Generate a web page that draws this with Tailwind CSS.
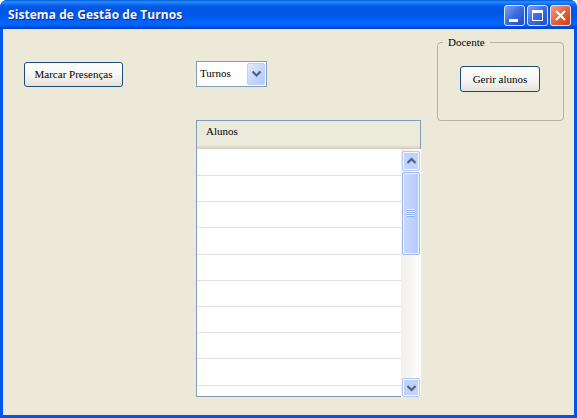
<!DOCTYPE html>
<html lang="pt">
<head>
<meta charset="utf-8">
<title>Sistema de Gestão de Turnos</title>
<script src="https://cdn.jsdelivr.net/npm/@tailwindcss/browser@4"></script>
</head>
<body class="w-[577px] h-[418px] overflow-hidden bg-white font-['Liberation_Serif',serif] text-[11px] leading-[13px] text-black">
<div class="w-[577px] h-[418px] flex flex-col rounded-t-[7px] overflow-hidden bg-[#0055ea]">
  <header class="h-[29px] shrink-0 flex items-center pl-[8px] pr-[6px] bg-[linear-gradient(to_bottom,#0058d8_0px,#2a8cff_2px,#1270f4_4px,#0058e6_7px,#0055e5_13px,#005cf5_18px,#0066ff_23px,#0062f8_25px,#004fd8_27px,#003fc0_29px)]">
    <h1 class="font-['Open_Sans',sans-serif] font-bold text-[12px] leading-4 tracking-[0.06px] text-[#f4f8ff] whitespace-nowrap [text-shadow:1px_1px_0_#0a2a8c]">Sistema de Gestão de Turnos</h1>
    <div class="ml-auto mt-[2px] flex gap-[2px]">
      <svg class="w-[21px] h-[21px]" viewBox="0 0 21 21"><defs><linearGradient id="b" x1="0" y1="0" x2="1" y2="1"><stop offset="0" stop-color="#7fa4f3"/><stop offset=".5" stop-color="#3c6be0"/><stop offset="1" stop-color="#1c48c8"/></linearGradient><linearGradient id="r" x1="0" y1="0" x2="1" y2="1"><stop offset="0" stop-color="#f0a088"/><stop offset=".5" stop-color="#e36340"/><stop offset="1" stop-color="#cf3c10"/></linearGradient></defs><rect x=".5" y=".5" width="20" height="20" rx="2.5" fill="url(#b)" stroke="#dce6fa"/><path d="M5 14h9v3H5z" fill="#fff"/></svg>
      <svg class="w-[21px] h-[21px]" viewBox="0 0 21 21"><rect x=".5" y=".5" width="20" height="20" rx="2.5" fill="url(#b)" stroke="#dce6fa"/><path d="M5 5h11v11H5zM6 8v7h9V8z" fill="#fff" fill-rule="evenodd"/></svg>
      <svg class="w-[21px] h-[21px]" viewBox="0 0 21 21"><rect x=".5" y=".5" width="20" height="20" rx="2.5" fill="url(#r)" stroke="#f4e4e0"/><path d="M6 6l9 9M15 6l-9 9" stroke="#fff" stroke-width="2.1"/></svg>
    </div>
  </header>
  <main class="mx-[3px] mb-[3px] flex-1 min-h-0 flex items-start bg-[#ece9d8]">
    <button class="ml-[21px] mt-[33px] w-[99px] h-[25px] shrink-0 rounded-[3px] border border-[#1c4c7c] bg-linear-to-b from-white via-[#f7f6f3] to-[#e6e3da]">Marcar Presenças</button>
    <section class="ml-[73px] mt-[32px] w-[225px] shrink-0">
      <div class="w-[71px] h-[26px] flex items-center border border-[#7f9db9] bg-white pl-[3px] pr-px">
        <span class="-mt-[2px]">Turnos</span>
        <span class="ml-auto w-[18px] h-[22px] rounded-[2px] border border-[#bccdf6] bg-linear-to-br from-[#e0e9fe] to-[#b0c8f8] flex items-center justify-center"><svg class="w-[11px] h-[8px]" viewBox="0 0 11 8"><path d="M1.5 1.5L5.5 5.5L9.5 1.5" fill="none" stroke="#4d6185" stroke-width="2.2"/></svg></span>
      </div>
      <div class="mt-[33px] w-[225px] h-[277px] flex flex-col">
        <div class="h-[29px] shrink-0 w-[225px] border border-b-0 border-[#7f9db9] bg-[linear-gradient(to_bottom,#ebeadb_0px,#ebeadb_24px,#e0dccb_26px,#cfcab8_28px)] pl-[9px] pt-[4px]">Alunos</div>
        <div class="flex-1 min-h-0 flex">
          <div class="w-[205px] h-full overflow-hidden border-l border-b border-[#7f9db9] bg-white">
            <div class="h-[27px] border-b border-[#e2e2e2]"></div>
            <div class="h-[26px] border-b border-[#e2e2e2]"></div>
            <div class="h-[26px] border-b border-[#e2e2e2]"></div>
            <div class="h-[27px] border-b border-[#e2e2e2]"></div>
            <div class="h-[26px] border-b border-[#e2e2e2]"></div>
            <div class="h-[26px] border-b border-[#e2e2e2]"></div>
            <div class="h-[26px] border-b border-[#e2e2e2]"></div>
            <div class="h-[26px] border-b border-[#e2e2e2]"></div>
            <div class="h-[27px] border-b border-[#e2e2e2]"></div>
          </div>
          <div class="w-[20px] h-full flex flex-col items-center bg-linear-to-r from-[#f0efea] to-[#fefefd] pt-[2px]">
            <span class="w-[18px] h-[20px] rounded-[2px] border border-[#b4c8f2] bg-[#c1d3fb] shadow-[inset_0_0_0_1px_#f4f7ff] flex items-center justify-center"><svg class="w-[11px] h-[8px]" viewBox="0 0 11 8"><path d="M1.5 6L5.5 2L9.5 6" fill="none" stroke="#4d6185" stroke-width="2.2"/></svg></span>
            <span class="mt-[1px] w-[18px] h-[83px] shrink-0 rounded-[2px] border border-[#a3baea] bg-linear-to-r from-[#c9d7fc] to-[#b3cbfe] shadow-[inset_0_0_0_1px_#e8effe] flex flex-col items-center justify-center pr-[1px] pb-[2px]">
              <i class="w-[8px] h-px bg-[#eef4fe]"></i><i class="w-[8px] h-px bg-[#8cb0f8]"></i><i class="w-[8px] h-px bg-[#eef4fe]"></i><i class="w-[8px] h-px bg-[#8cb0f8]"></i><i class="w-[8px] h-px bg-[#eef4fe]"></i><i class="w-[8px] h-px bg-[#8cb0f8]"></i><i class="w-[8px] h-px bg-[#eef4fe]"></i><i class="w-[8px] h-px bg-[#8cb0f8]"></i>
            </span>
            <span class="mt-auto w-[18px] h-[19px] rounded-[2px] border border-[#b4c8f2] bg-[#c1d3fb] shadow-[inset_0_0_0_1px_#f4f7ff] flex items-center justify-center"><svg class="w-[11px] h-[8px]" viewBox="0 0 11 8"><path d="M1.5 2L5.5 6L9.5 2" fill="none" stroke="#4d6185" stroke-width="2.2"/></svg></span>
          </div>
        </div>
      </div>
    </section>
    <fieldset class="ml-[16px] mt-[7px] w-[127px] h-[85px] shrink-0 rounded-[4px] border border-[#b5b29f] pl-[22px]">
      <legend class="-ml-[17px] pl-[5px] pr-[5px]">Docente</legend>
      <button class="mt-[17px] w-[80px] h-[26px] rounded-[3px] border border-[#1c4c7c] bg-linear-to-b from-white via-[#f7f6f3] to-[#e6e3da]">Gerir alunos</button>
    </fieldset>
  </main>
</div>
</body>
</html>
